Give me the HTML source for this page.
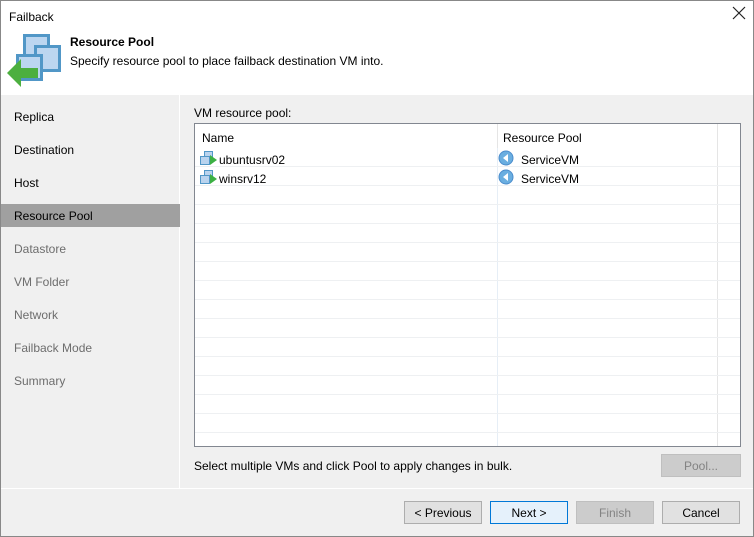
<!DOCTYPE html>
<html><head><style>
*{margin:0;padding:0;box-sizing:border-box}
body{width:754px;height:537px;overflow:hidden;font-family:"Liberation Sans",sans-serif;font-size:12px;color:#000;background:#f0f0f0;position:relative}
.win{position:absolute;left:0;top:0;width:754px;height:537px;border:1px solid #888;}
.hdr{position:absolute;left:1px;top:1px;width:752px;height:94px;background:#fff}
.t{position:absolute;white-space:nowrap}
.nav{position:absolute;left:1px;top:95px;width:179px;height:393px;background:#f0f0f0;border-right:1px solid #fff}
.nav div{position:absolute;left:0;width:179px;height:23px;line-height:25px;padding-left:13px}
.dis{color:#6d6d6d}
.sel{background:#a0a0a0}
.tbl{position:absolute;left:194px;top:123px;width:547px;height:324px;background:#fff;border:1px solid #828790;overflow:hidden}
.rl{position:absolute;left:0;width:545px;height:1px;background:#eef0f2}
.btn{position:absolute;height:23px;border:1px solid #adadad;background:#e1e1e1;text-align:center;line-height:22px}
</style></head><body>
<div class="win"></div>
<div class="hdr">
<div class="t" style="left:8px;top:9px">Failback</div>
<svg style="position:absolute;left:731px;top:5px" width="14" height="14"><path d="M1 1L13 13M13 1L1 13" stroke="#222" stroke-width="1.2"/></svg>
<svg style="position:absolute;left:4px;top:33px" width="58" height="58">
<rect x="19.5" y="1.5" width="24" height="24" fill="#bcd6f0" stroke="#5197c7" stroke-width="3"/>
<rect x="30.5" y="12.5" width="24" height="24" fill="#bcd6f0" stroke="#5197c7" stroke-width="3"/>
<rect x="12.5" y="21.5" width="24" height="24" fill="#bcd6f0" stroke="#5197c7" stroke-width="3"/>
<polygon points="2,39 16,25 16,34 33,34 33,44 16,44 16,53" fill="#4caf3f"/>
</svg>
<div class="t" style="left:69px;top:34px;font-weight:bold">Resource Pool</div>
<div class="t" style="left:69px;top:53px">Specify resource pool to place failback destination VM into.</div>
</div>
<div class="nav">
<div style="top:10px">Replica</div>
<div style="top:43px">Destination</div>
<div style="top:76px">Host</div>
<div class="sel" style="top:109px">Resource Pool</div>
<div class="dis" style="top:142px">Datastore</div>
<div class="dis" style="top:175px">VM Folder</div>
<div class="dis" style="top:208px">Network</div>
<div class="dis" style="top:241px">Failback Mode</div>
<div class="dis" style="top:274px">Summary</div>
</div>
<div class="t" style="left:194px;top:106px">VM resource pool:</div>
<div class="tbl">
<div class="t" style="left:7px;top:7px">Name</div>
<div class="t" style="left:308px;top:7px">Resource Pool</div>
<div style="position:absolute;left:302px;top:0;width:1px;height:24px;background:#e5e5e5"></div>
<div style="position:absolute;left:522px;top:0;width:1px;height:324px;background:#e5e5e5"></div>
<div style="position:absolute;left:302px;top:24px;width:1px;height:300px;background:#e6eef6"></div>
<div class="rl" style="top:42px"></div><div class="rl" style="top:61px"></div><div class="rl" style="top:80px"></div><div class="rl" style="top:99px"></div><div class="rl" style="top:118px"></div><div class="rl" style="top:137px"></div><div class="rl" style="top:156px"></div><div class="rl" style="top:175px"></div><div class="rl" style="top:194px"></div><div class="rl" style="top:213px"></div><div class="rl" style="top:232px"></div><div class="rl" style="top:251px"></div><div class="rl" style="top:270px"></div><div class="rl" style="top:289px"></div><div class="rl" style="top:308px"></div>
<svg style="position:absolute;left:5px;top:26px" width="18" height="16"><rect x="4.5" y="1.5" width="8" height="7" fill="#b9d3ee" stroke="#5197c7"/><rect x="0.5" y="6.5" width="9" height="8" fill="#b9d3ee" stroke="#5197c7"/><polygon points="10,5 17,10 10,15" fill="#3cb043"/></svg>
<div class="t" style="left:24px;top:29px">ubuntusrv02</div>
<svg style="position:absolute;left:5px;top:45px" width="18" height="16"><rect x="4.5" y="1.5" width="8" height="7" fill="#b9d3ee" stroke="#5197c7"/><rect x="0.5" y="6.5" width="9" height="8" fill="#b9d3ee" stroke="#5197c7"/><polygon points="10,5 17,10 10,15" fill="#3cb043"/></svg>
<div class="t" style="left:24px;top:48px">winsrv12</div>
<svg style="position:absolute;left:303px;top:26px" width="16" height="16"><circle cx="8" cy="8" r="7" fill="#6aaee0" stroke="#4a8ccc"/><polygon points="10,4 5,8 10,12" fill="#fff"/></svg>
<div class="t" style="left:326px;top:29px">ServiceVM</div>
<svg style="position:absolute;left:303px;top:45px" width="16" height="16"><circle cx="8" cy="8" r="7" fill="#6aaee0" stroke="#4a8ccc"/><polygon points="10,4 5,8 10,12" fill="#fff"/></svg>
<div class="t" style="left:326px;top:48px">ServiceVM</div>
</div>
<div class="t" style="left:194px;top:459px">Select multiple VMs and click Pool to apply changes in bulk.</div>
<div class="btn" style="left:661px;top:454px;width:80px;background:#ccc;border-color:#bfbfbf;color:#838383">Pool...</div>
<div style="position:absolute;left:1px;top:488px;width:752px;height:1px;background:#fff"></div>
<div class="btn" style="left:404px;top:501px;width:78px">&lt; Previous</div>
<div class="btn" style="left:490px;top:501px;width:78px;background:#e5f1fb;border-color:#0078d7">Next &gt;</div>
<div class="btn" style="left:576px;top:501px;width:78px;background:#ccc;border-color:#bfbfbf;color:#838383">Finish</div>
<div class="btn" style="left:662px;top:501px;width:78px">Cancel</div>
</body></html>
